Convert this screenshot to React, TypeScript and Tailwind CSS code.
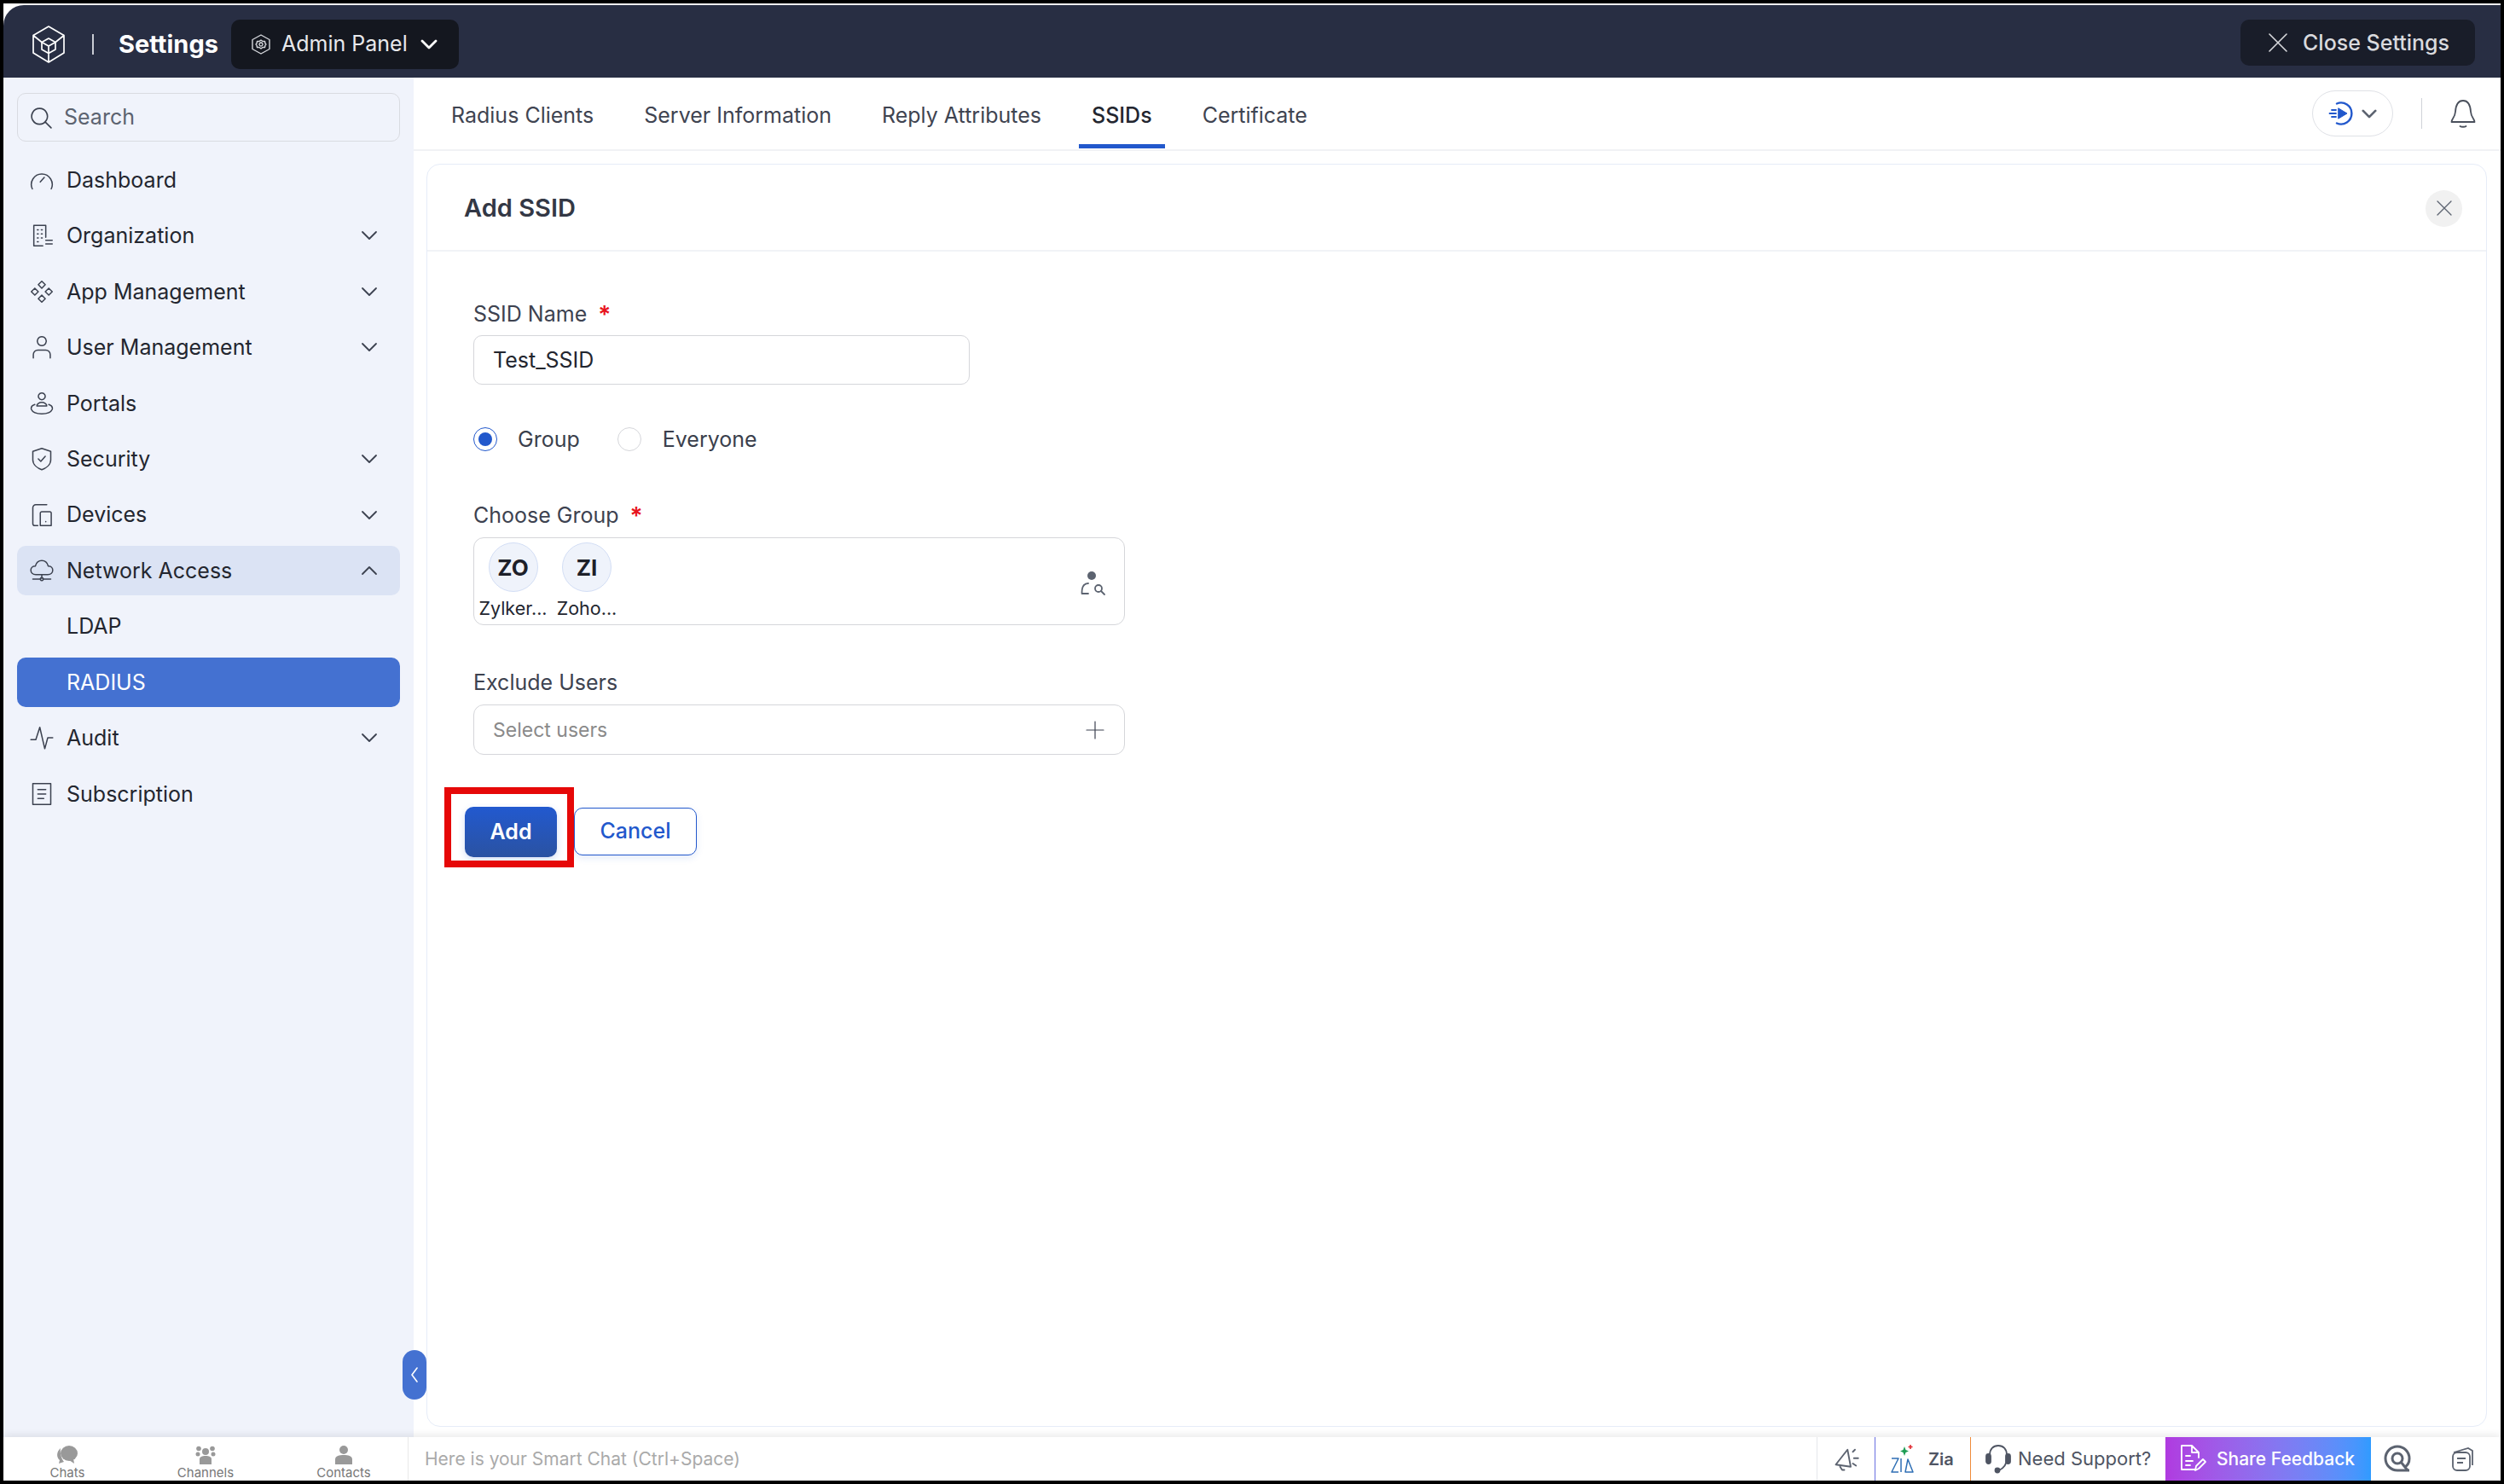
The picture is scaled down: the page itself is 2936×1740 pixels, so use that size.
import React from "react";

const S = (p: { w: number; h?: number; vb?: string; children: React.ReactNode; className?: string; sw?: number; stroke?: string }) => (
  <svg width={p.w} height={p.h ?? p.w} viewBox={p.vb ?? "0 0 24 24"} fill="none" stroke={p.stroke ?? "currentColor"} strokeWidth={p.sw ?? 1.3} strokeLinecap="round" strokeLinejoin="round" className={p.className}>
    {p.children}
  </svg>
);

const Chevron = ({ up }: { up?: boolean }) => (
  <S w={20} h={12} vb="0 0 20 12" sw={1.8}>
    <path d={up ? "M2 10 L10 2 L18 10" : "M2 2 L10 10 L18 2"} />
  </S>
);

const icons: Record<string, React.ReactNode> = {
  Dashboard: <path d="M2.5 21 A10.500 10.500 0 1 1 21.5 21 M10.500 14 L14.500 9.500" />,
  Organization: <path d="M4 22.500 V2 H16 V14 M4 22.500 H13 M7.500 6.500 H8.500 M11.500 6.500 H12.500 M7.500 10.500 H8.500 M11.500 10.500 H12.500 M7.500 14.500 H8.500 M11.500 14.500 H12.500 M7.500 18.500 H8.500 M16 17 H22.500 M16 20.500 H22.500" />,
  "App Management": <path d="M12 1.500 L15.500 5 L12 8.500 L8.500 5 Z M12 15.500 L15.500 19 L12 22.500 L8.500 19 Z M5 8.500 L8.500 12 L5 15.500 L1.500 12 Z M19 8.500 L22.500 12 L19 15.500 L15.500 12 Z" />,
  "User Management": <path d="M12 1.500 a4.500 4.500 0 1 0 0.010 0 Z M3.500 23 V19.500 a4.500 4.500 0 0 1 4.500 -4.500 H16 a4.500 4.500 0 0 1 4.500 4.500 V23" />,
  Portals: <path d="M12 1.500 a3.400 3.400 0 1 0 0.010 0 Z M7 14.500 a5 3.500 0 0 1 10 0 M7 14.500 H17 M5 13 C2 14 1 16 1.500 18 C3 21.500 7 22.500 12 22.500 C17 22.500 21 21.500 22.500 18 C23 16 22 14 19 13" />,
  Security: <path d="M12 1.500 L21 4.500 V13 C21 18 16 21.500 12 23 C8 21.500 3 18 3 13 V4.500 Z M8.500 12 L11 14.500 L15.500 9.500" />,
  Devices: <path d="M17 1.500 H6 A3 3 0 0 0 3 4.500 V20.500 A2 2 0 0 0 5 22.500 H8 M12 8.500 H20 A1.500 1.500 0 0 1 21.500 10 V22.500 H10.500 V10 A1.500 1.500 0 0 1 12 8.500 Z M16 18.500 V18.600" />,
  "Network Access": <path d="M6 16 H18 C21 16 23 14 23 11.500 C23 9 21 7.500 18.500 7.500 C17.500 4 15 2 12 2 C9 2 6.500 4 5.500 7.500 C3 7.500 1 9 1 11.500 C1 14 3 16 6 16 Z M12 16 V20 M3 20.500 H10 M14 20.500 H21 M12 19 a1.500 1.500 0 1 0 0.010 0" />,
  Audit: <path d="M1 14 H6 L10 1.500 L15 23 L18 12 H23" />,
  Subscription: <path d="M3 1.500 H21 V22.500 H3 Z M8 7.500 H16 M8 12 H16 M8 16.500 H14" />,
};

const Item = ({ label, chevron, up, active }: { label: string; chevron?: boolean; up?: boolean; active?: boolean }) => (
  <div className={`flex h-[58px] items-center rounded-[10px] pl-[15px] pr-[26px] ${active ? "bg-[#dbe3f4]" : ""}`}>
    <span className="flex w-[28px] justify-center text-[#3c4250]">
      <S w={28}>{icons[label]}</S>
    </span>
    <span className="ml-[15px] flex-1 pt-[1px] text-[25px] text-[#23262f]">{label}</span>
    {chevron && <span className="text-[#3c4250]"><Chevron up={up} /></span>}
  </div>
);

const Sub = ({ label, active }: { label: string; active?: boolean }) => (
  <div className={`flex h-[58px] items-center rounded-[10px] pl-[58px] pt-[1px] text-[25px] ${active ? "bg-[#4471d1] text-white" : "text-[#23262f]"}`}>{label}</div>
);

const Tab = ({ label, active }: { label: string; active?: boolean }) => (
  <div className={`flex h-[83px] items-center border-b-[5px] px-[15px] pt-[11px] text-[25px] ${active ? "border-[#2258cc] font-medium text-[#23262f]" : "border-transparent text-[#3f4451]"}`}>{label}</div>
);

const Star = () => <span className="ml-[13px] text-[28px] leading-[30px] font-semibold text-[#e8141c]">*</span>;

const Label = ({ children, star }: { children: React.ReactNode; star?: boolean }) => (
  <div className="flex h-[30px] items-center pt-[2px] text-[25px] text-[#3d4250]">
    {children}
    {star && <Star />}
  </div>
);

const Avatar = ({ t }: { t: string }) => (
  <div className="flex h-[58px] w-[58px] items-center justify-center rounded-full border border-[#d3def5] bg-[#eff3fb] text-[26px] font-bold text-[#1d2029]">{t}</div>
);

const FootTab = ({ label, children }: { label: string; children: React.ReactNode }) => (
  <div className="flex w-[150px] flex-col items-center pt-[10px] text-[#999]">
    {children}
    <span className="mt-[2px] text-[15px] leading-[16px] text-[#777]">{label}</span>
  </div>
);

export default function App() {
  return (
    <div className="flex h-[1740px] w-[2936px] flex-col overflow-hidden border-4 border-black bg-white font-['Inter',sans-serif]">
      <div className="relative h-[2px] bg-[#f1f1f1]" />
      <header className="flex h-[85px] items-center rounded-tl-[24px] bg-[#282e43] pl-[33px] pr-[30px] pt-[6px]">
        <S w={40} h={44} vb="0 0 40 44" sw={1.7} stroke="#ffffff">
          <path d="M20 1 L38 11.500 V32 L20 43 L2 32 V11.500 Z M20 43 V27 M20 15 L28 19.500 V28 L20 32.500 L12 28 V19.500 Z M12 19.500 L20 24 L28 19.500 M20 24 V32.500 M2 11.500 L12 19.500 M38 11.500 L28 19.500" />
        </S>
        <div className="ml-[31px] h-[24px] w-[2px] bg-[#c9ccd4]" />
        <span className="ml-[29px] text-[29px] font-bold text-white">Settings</span>
        <div className="ml-[15px] flex h-[58px] w-[267px] items-center rounded-[10px] bg-[#14171f] pl-[23px] text-[#e8e9ec]">
          <S w={24} h={26} sw={1.4} stroke="#d5d7dc">
            <path d="M12 1 L22 6.500 V17.500 L12 23 L2 17.500 V6.500 Z M12 7 l2 1.500 2.500 0 .5 2.500 1 1 -1 1 -.5 2.500 -2.500 0 -2 1.500 -2 -1.500 -2.500 0 -.5 -2.500 -1 -1 1 -1 .5 -2.500 2.500 0 Z M12 10 a2 2 0 1 0 .01 0" />
          </S>
          <span className="ml-[12px] text-[25px]">Admin Panel</span>
          <span className="ml-[15px] text-white"><S w={20} h={12} vb="0 0 20 12" sw={2.8}><path d="M2 2 L10 10 L18 2" /></S></span>
        </div>
        <div className="-mt-[3px] ml-auto flex h-[54px] w-[275px] items-center rounded-[10px] bg-[#191d29] pl-[33px] text-[#d9dade]">
          <S w={22} vb="0 0 22 22" sw={1.6}><path d="M1 1 L21 21 M21 1 L1 21" /></S>
          <span className="ml-[18px] pt-[1px] text-[25px] font-medium">Close Settings</span>
        </div>
      </header>

      <div className="flex min-h-0 flex-1">
        <aside className="relative w-[481px] shrink-0 bg-[#f0f3fb] px-[16px] pt-[18px]">
          <div className="flex h-[57px] items-center rounded-[10px] border border-[#d9dbe1] pl-[14px] text-[#5c6370]">
            <S w={26} sw={1.5} stroke="#3c4250"><path d="M10.500 2 a8.500 8.500 0 1 0 .01 0 Z M16.500 16.500 L23 23" /></S>
            <span className="ml-[14px] text-[25px]">Search</span>
          </div>
          <nav className="mt-[16px] flex flex-col gap-[7.45px]">
            <Item label="Dashboard" />
            <Item label="Organization" chevron />
            <Item label="App Management" chevron />
            <Item label="User Management" chevron />
            <Item label="Portals" />
            <Item label="Security" chevron />
            <Item label="Devices" chevron />
            <Item label="Network Access" chevron up active />
            <Sub label="LDAP" />
            <Sub label="RADIUS" active />
            <Item label="Audit" chevron />
            <Item label="Subscription" />
          </nav>
          <div className="absolute bottom-[44px] right-[-15px] z-10 flex h-[58px] w-[28px] items-center justify-center rounded-full bg-[#4471d1] text-white">
            <S w={10} h={20} vb="0 0 10 20" sw={1.6}><path d="M8 2 L2 10 L8 18" /></S>
          </div>
        </aside>

        <main className="flex min-w-0 flex-1 flex-col">
          <div className="flex h-[86px] shrink-0 items-start border-b-[2px] border-[#f1f2f5] pl-[29px] pr-[29px]">
            <div className="flex gap-[29px]">
              <Tab label="Radius Clients" />
              <Tab label="Server Information" />
              <Tab label="Reply Attributes" />
              <Tab label="SSIDs" active />
              <Tab label="Certificate" />
            </div>
            <div className="ml-auto flex items-center pt-[15px]">
              <div className="flex h-[54px] w-[95px] items-center rounded-full border border-[#dfe1e6] pl-[18px]">
                <S w={30} vb="0 0 30 30" sw={2.4} stroke="#2258cc">
                  <path d="M10 3.500 A12.500 12.500 0 1 1 10 26.500" />
                  <path d="M12 9 L22 15 L12 21 Z" fill="#2258cc" strokeWidth={1} />
                  <path d="M4 11 H9 M1.500 15 H9 M4 19 H9" strokeWidth={1.8} />
                </S>
                <span className="ml-[9px] text-[#5c6370]"><S w={18} h={11} vb="0 0 20 12" sw={3}><path d="M2 2 L10 10 L18 2" /></S></span>
              </div>
              <div className="ml-[33px] h-[36px] w-[1px] bg-[#cfd2d8]" />
              <span className="ml-[33px] text-[#4a505c]">
                <S w={30} h={34} vb="0 0 30 34" sw={1.8}>
                  <path d="M1.500 27 C1.500 23 5.500 22 6 15 C6.500 7 9 2 15 2 C21 2 23.500 7 24 15 C24.500 22 28.500 23 28.500 27 Z M11.500 32 C13 33 17 33 18.500 32" />
                </S>
              </span>
            </div>
          </div>

          <div className="ml-[15px] mr-[16px] mt-[15px] mb-[12px] min-h-0 flex-1 rounded-[16px] border border-[#e6ecf8] bg-white">
            <div className="flex h-[102px] items-center justify-between border-b-[2px] border-[#f1f3f7] pl-[43px] pr-[28px] pt-[2px]">
              <span className="text-[29px] font-semibold text-[#333845]">Add SSID</span>
              <div className="flex h-[43px] w-[43px] items-center justify-center rounded-full bg-[#f1f1f1] text-[#5c6370]">
                <S w={18} vb="0 0 18 18" sw={1.3}><path d="M1 1 L17 17 M17 1 L1 17" /></S>
              </div>
            </div>
            <div className="pl-[54px] pt-[58px]">
              <Label star>SSID Name</Label>
              <div className="mt-[10px] flex h-[58px] w-[582px] items-center rounded-[10px] border border-[#d5d6da] pl-[22px] pt-[2px] text-[25px] text-[#23262f]">Test_SSID</div>

              <div className="mt-[50px] flex h-[28px] items-center text-[25px] text-[#3a3f4c]">
                <span className="flex h-[28px] w-[28px] items-center justify-center rounded-full border border-[#2258cc]">
                  <span className="h-[16px] w-[16px] rounded-full bg-[#2258cc]" />
                </span>
                <span className="ml-[24px] pt-[1px]">Group</span>
                <span className="ml-[44px] h-[28px] w-[28px] rounded-full border border-[#d5d6da]" />
                <span className="ml-[25px] pt-[1px]">Everyone</span>
              </div>

              <div className="mt-[60px]"><Label star>Choose Group</Label></div>
              <div className="mt-[11px] flex h-[103px] w-[764px] items-start rounded-[12px] border border-[#d5d6da] pt-[5px]">
                <div className="flex w-[88px] flex-col items-center pl-[3px]">
                  <Avatar t="ZO" />
                  <span className="mt-[5px] text-[21.500px] leading-[28px] text-[#23262f]">Zylker...</span>
                </div>
                <div className="flex w-[88px] flex-col items-center">
                  <Avatar t="ZI" />
                  <span className="mt-[5px] text-[21.500px] leading-[28px] text-[#23262f]">Zoho...</span>
                </div>
                <span className="ml-auto mr-[21px] mt-[33px] text-[#5c6370]">
                  <svg width="30" height="30" viewBox="0 0 30 30" fill="none" stroke="currentColor" strokeWidth="1.8" strokeLinecap="round">
                    <circle cx="13" cy="6" r="5" fill="currentColor" stroke="none" />
                    <path d="M9 15 C3 15 1.500 21 1.500 26 M1.500 27 H9" />
                    <circle cx="21" cy="21" r="4" />
                    <path d="M24 24 L28 28" />
                  </svg>
                </span>
              </div>

              <div className="mt-[52px]"><Label>Exclude Users</Label></div>
              <div className="mt-[11px] flex h-[59px] w-[764px] items-center justify-between rounded-[12px] border border-[#d5d6da] pl-[22px] pr-[23px] text-[23px] text-[#8a8a8a]">
                <span className="pt-[2px]">Select users</span>
                <span className="text-[#3c4250]"><S w={22} vb="0 0 22 22" sw={1.2}><path d="M11 1 V21 M1 11 H21" /></S></span>
              </div>

              <div className="-ml-[10px] mt-[61px] flex items-start">
                <div className="relative">
                  <div className="flex h-[59px] w-[108px] items-center justify-center rounded-[10px] bg-gradient-to-b from-[#2259cf] to-[#2a52a2] text-[25px] font-semibold text-white shadow-[0_3px_8px_rgba(34,88,204,0.2)]">Add</div>
                  <div className="absolute -bottom-[12px] -left-[24px] -right-[20px] -top-[23px] border-[8px] border-[#e60808]" />
                </div>
                <div className="ml-[20px] mt-[1px] flex h-[56px] w-[144px] items-center justify-center rounded-[10px] border border-[#2258cc] bg-white text-[25px] font-medium text-[#2258cc] shadow-[0_3px_8px_rgba(34,88,204,0.12)]">Cancel</div>
              </div>
            </div>
          </div>
        </main>
      </div>

      <footer className="relative z-10 flex h-[51px] shrink-0 items-stretch bg-white shadow-[0_-3px_8px_rgba(0,0,0,0.08)]">
        <div className="flex w-[475px] shrink-0 gap-[12px] border-r border-[#e9e9e9]">
          <FootTab label="Chats">
            <svg width="26" height="22" viewBox="0 0 26 22" fill="currentColor"><ellipse cx="15" cy="9" rx="10" ry="9" /><path d="M5 3 C0 7 0 14 4 17 L3 21 L9 19 C6 15 4 9 5 3 Z" /><path d="M15 17 L21 21 L20 15 Z" /></svg>
          </FootTab>
          <FootTab label="Channels">
            <svg width="26" height="22" viewBox="0 0 26 22" fill="currentColor"><circle cx="13" cy="7" r="4" /><circle cx="5" cy="3.500" r="2.800" /><circle cx="21" cy="3.500" r="2.800" /><circle cx="4" cy="10" r="2.500" /><circle cx="22" cy="10" r="2.500" /><path d="M6 22 V16 C6 13 9 12 13 12 C17 12 20 13 20 16 V22 Z" /></svg>
          </FootTab>
          <FootTab label="Contacts">
            <svg width="26" height="22" viewBox="0 0 26 22" fill="currentColor"><circle cx="13" cy="5" r="5" /><path d="M3 22 V16 C3 12 8 11 13 11 C18 11 23 12 23 16 V22 Z" /></svg>
          </FootTab>
        </div>
        <div className="flex min-w-0 flex-1 items-center pl-[19px] text-[21px] text-[#aaaaaa]">Here is your Smart Chat (Ctrl+Space)</div>
        <div className="flex w-[68px] shrink-0 items-center justify-center border-l border-[#e5e7eb] text-[#5c6370]">
          <S w={30} sw={1.5}>
            <path d="M2 17 L13 3 L16 19 Z M6 19 L8 22 H10 M18 5 L20 3 M19 11 H23 M18 16 L21 18" />
          </S>
        </div>
        <div className="flex w-[112px] shrink-0 items-center border-l border-[#6a6fe0] pl-[17px] text-[#4f5563]">
          <svg width="28" height="34" viewBox="0 0 28 34" fill="none" stroke="#2f6fb5" strokeWidth="1.500" strokeLinejoin="round">
            <path d="M2 16 H10 L2 32 H10 M13 16 V32 M18 32 L21 17 L27 32 Z" />
            <path d="M17 2 L18.500 6 L22 7.500 L18.500 9 L17 13 L15.500 9 L12 7.500 L15.500 6 Z" fill="#1f9d55" stroke="none" />
            <path d="M24 0 V5 M21.500 2.500 H26.500" stroke="#e0262d" />
          </svg>
          <span className="ml-[17px] text-[20px] font-semibold">Zia</span>
        </div>
        <div className="flex w-[229px] shrink-0 items-center border-l border-[#ef8b3a] pl-[17px] text-[#4f5563]">
          <S w={30} h={36} vb="0 0 30 36" sw={1.8}>
            <path d="M5 17 V13 C5 6 9 2 15 2 C21 2 25 6 25 13 V17 C25 24 22 28 16 31" />
            <rect x="1" y="12" width="5" height="11" rx="2.500" fill="currentColor" />
            <rect x="24" y="12" width="5" height="11" rx="2.500" fill="currentColor" />
            <circle cx="14" cy="31" r="2.500" fill="currentColor" />
          </S>
          <span className="ml-[8px] text-[22px]">Need Support?</span>
        </div>
        <div className="flex w-[241px] shrink-0 items-center bg-gradient-to-r from-[#b03ae0] to-[#2f9bff] pl-[17px] text-white">
          <S w={32} h={36} vb="0 0 32 36" sw={1.8}>
            <path d="M19 30 H2 V2 H14 L22 10 V16 M14 2 V10 H22 M7 14 H12 M7 20 H15 M7 25 H12 M18 31 L19 26 L27 18 L30 21 L22 29 Z" />
          </S>
          <span className="ml-[11px] text-[21px] font-medium">Share Feedback</span>
        </div>
        <div className="flex w-[152px] shrink-0 items-center text-[#5c6370]">
          <span className="ml-[15px]">
            <svg width="33" height="33" viewBox="0 0 33 33" fill="none" stroke="currentColor" strokeWidth="3"><path d="M30 30 H16 A14 14 0 1 1 30 16 C30 20 28 24 25 26" /><circle cx="16" cy="16" r="6" /><path d="M20 20 L28 30" /></svg>
          </span>
          <span className="ml-[46px]">
            <svg width="27" height="30" viewBox="0 0 27 30" fill="none" stroke="currentColor" strokeWidth="1.800"><path d="M3 7 L20 2 L25 5 V22" /><rect x="2" y="7" width="20" height="21" rx="5" /><path d="M7 14 H17 M7 19 H14" /></svg>
          </span>
        </div>
      </footer>
    </div>
  );
}
